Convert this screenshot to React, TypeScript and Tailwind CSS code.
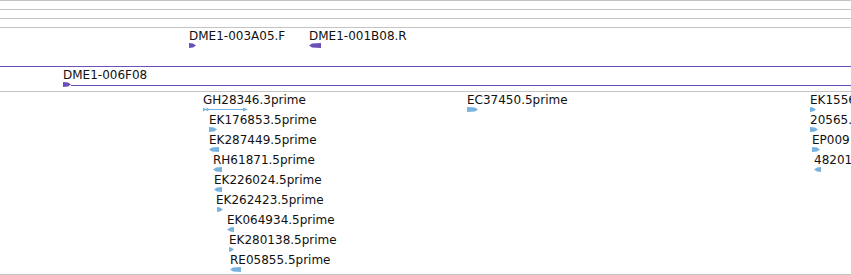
import React from "react";

type Dir = "r" | "l" | "both"
type Feat = { label: string, x: number, gx?: number, gw: number, dir: Dir }

const PURPLE = "#6c4fb8"
const BLUE = "#78b3e0"

// each row of the EST track, features placed by their genomic x
const estRows: Feat[][] = [
    [
        {label: "GH28346.3prime", x: 203, gw: 44, dir: "both"},
        {label: "EC37450.5prime", x: 467, gw: 11, dir: "r"},
        {label: "EK155614.5prime", x: 810, gw: 6, dir: "r"},
    ],
    [
        {label: "EK176853.5prime", x: 209, gw: 8, dir: "r"},
        {label: "20565.5prime", x: 810, gw: 8, dir: "r"},
    ],
    [
        {label: "EK287449.5prime", x: 209, gw: 10, dir: "l"},
        {label: "EP009123.5prime", x: 812, gw: 8, dir: "r"},
    ],
    [
        {label: "RH61871.5prime", x: 213, gw: 9, dir: "l"},
        {label: "48201.5prime", x: 814, gw: 7, dir: "l"},
    ],
    [{label: "EK226024.5prime", x: 214, gw: 8, dir: "l"}],
    [{label: "EK262423.5prime", x: 216, gx: 1, gw: 6, dir: "r"}],
    [{label: "EK064934.5prime", x: 227, gw: 7, dir: "l"}],
    [{label: "EK280138.5prime", x: 229, gw: 5, dir: "r"}],
    [{label: "RE05855.5prime", x: 230, gw: 11, dir: "l"}],
]

function Glyph({w, dir, color}: { w: number, dir: Dir, color: string }) {
    if (dir === "both") {
        return (
            <svg width={w + 1} height={5} viewBox={`0 0 ${w + 1} 5`} className="block">
                <line x1={0} y1={2.5} x2={w} y2={2.5} stroke={color} strokeWidth={1}/>
                <polygon points="0,0.5 3.5,2.5 0,4.5" fill={color}/>
                <polygon points="3.5,0.5 7,2.5 3.5,4.5" fill={color}/>
                <polygon points={`${w - 4},0.5 ${w + 1},2.5 ${w - 4},4.5`} fill={color}/>
            </svg>
        )
    }
    const pts = dir === "r"
        ? `0,0 ${w - 3},0.5 ${w},2.5 ${w - 3},4.5 0,5`
        : `3,0.5 ${w},0 ${w},5 3,4.5 0,2.5`
    return (
        <svg width={w} height={5} viewBox={`0 0 ${w} 5`} className="block">
            <polygon points={pts} fill={color}/>
        </svg>
    )
}

function Feature({f, color}: { f: Feat, color: string }) {
    return (
        <div className="absolute top-0 flex flex-col gap-[1px]" style={{left: f.x}}>
            <span className="whitespace-nowrap text-[12px] leading-[12px] text-[#111]">{f.label}</span>
            <div style={{marginLeft: f.gx ?? 0}}>
                <Glyph w={f.gw} dir={f.dir} color={color}/>
            </div>
        </div>
    )
}

export default function App() {
    return (
        <div className="w-[851px] h-[275px] overflow-hidden bg-white font-['DejaVu_Sans',sans-serif]">
            <div className="h-px bg-[#c4c4c4]"/>
            <div className="h-[9px] border-b border-[#c4c4c4]"/>
            <div className="h-[9px] border-b border-[#c4c4c4]"/>
            <div className="h-[9px] border-b border-[#c4c4c4]"/>

            {/* clone track */}
            <div className="flex flex-col border-b border-[#c4c4c4]">
                <div className="relative h-[36px] mt-[2px]">
                    <Feature f={{label: "DME1-003A05.F", x: 189, gw: 7, dir: "r"}} color={PURPLE}/>
                    <Feature f={{label: "DME1-001B08.R", x: 309, gw: 12, dir: "l"}} color={PURPLE}/>
                </div>
                <div className="h-px bg-[#6c4fb8]"/>
                <div className="relative h-[24px]">
                    <div className="absolute left-[63px] top-[2px] right-0 flex flex-col gap-[1px]">
                        <span className="whitespace-nowrap text-[12px] leading-[12px] text-[#111]">DME1-006F08</span>
                        <div className="flex items-end">
                            <Glyph w={8} dir="r" color={PURPLE}/>
                            <div className="flex-1 h-px mb-px bg-[#6c4fb8]"/>
                        </div>
                    </div>
                </div>
            </div>

            {/* est track */}
            <div className="flex flex-col pt-[2px] h-[183px] border-b border-[#c4c4c4]">
                {estRows.map((row, i) => (
                    <div key={i} className="relative h-[20px] shrink-0">
                        {row.map(f => (
                            <Feature key={f.label} f={f} color={BLUE}/>
                        ))}
                    </div>
                ))}
            </div>
        </div>
    );
}
